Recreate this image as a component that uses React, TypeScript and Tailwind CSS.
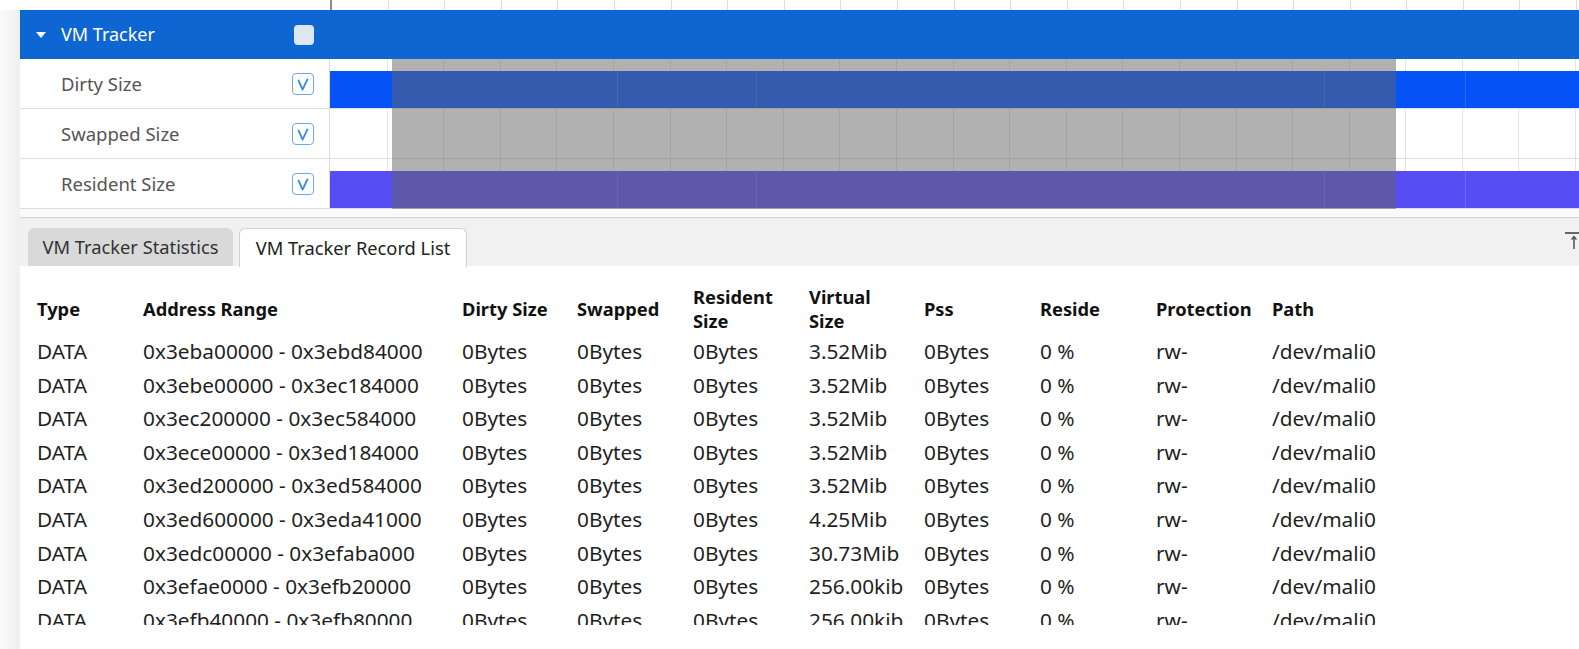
import React from "react";

const ticks = Array.from({ length: 22 }, (_, i) => i);

function GridLines({ color }: { color: string }) {
  return (
    <div className="absolute inset-0 flex pl-[1px]">
      {ticks.map((i) => (
        <div key={i} className={`h-full w-[56.6px] shrink-0 border-r ${color}`} />
      ))}
    </div>
  );
}

function Check() {
  return (
    <div className="flex h-[22px] w-[22px] items-center justify-center rounded-[4px] border-[1.5px] border-[#6ea8ea] bg-white">
      <svg width="22" height="22" viewBox="0 0 22 22" className="-m-[1.5px]">
        <path d="M6.6 7.6 L10.6 16.6 L15.4 6.4" fill="none" stroke="#3b8ce6" strokeWidth="1.9" strokeLinecap="round" strokeLinejoin="round" />
      </svg>
    </div>
  );
}

const segLines = [287, 426, 994, 1135];

function Bar({ color }: { color: string }) {
  return (
    <div className={`absolute left-0 right-0 top-[12px] bottom-0 ${color}`}>
      {segLines.map((x) => (
        <div key={x} className="absolute top-0 bottom-0 w-px bg-white/15" style={{ left: x }} />
      ))}
    </div>
  );
}

const rows = [
  { label: "Dirty Size", bar: "bg-[#0553f6]" },
  { label: "Swapped Size", bar: "" },
  { label: "Resident Size", bar: "bg-[#584cf5]" },
];

const records = [
  ["0x3eba00000 - 0x3ebd84000", "3.52Mib"],
  ["0x3ebe00000 - 0x3ec184000", "3.52Mib"],
  ["0x3ec200000 - 0x3ec584000", "3.52Mib"],
  ["0x3ece00000 - 0x3ed184000", "3.52Mib"],
  ["0x3ed200000 - 0x3ed584000", "3.52Mib"],
  ["0x3ed600000 - 0x3eda41000", "4.25Mib"],
  ["0x3edc00000 - 0x3efaba000", "30.73Mib"],
  ["0x3efae0000 - 0x3efb20000", "256.00kib"],
  ["0x3efb40000 - 0x3efb80000", "256.00kib"],
  ["0x3efc00000 - 0x3efc40000", "256.00kib"],
];

const cols =
  "grid grid-cols-[106px_319px_115px_116px_116px_115px_116px_116px_116px_1fr]";

export default function App() {
  return (
    <div className="flex h-[649px] w-[1579px] flex-col overflow-hidden bg-white font-['Noto_Sans',sans-serif]">
      {/* ruler */}
      <div className="flex h-[10px] shrink-0 bg-white">
        <div className="w-[330px] shrink-0" />
        <div className="w-[2px] shrink-0 bg-[#8c8c8c]" />
        <div className="relative flex-1">
          <div className="absolute inset-0 flex">
            {ticks.map((i) => (
              <div key={i} className="h-full w-[56.6px] shrink-0 border-r border-[#dcdcdc]" />
            ))}
          </div>
        </div>
      </div>

      <div className="flex min-h-0 flex-1">
        {/* gutter */}
        <div className="w-[20px] shrink-0 bg-gradient-to-r from-[#fbfbfb] to-[#efefef]" />

        <div className="flex min-w-0 flex-1 flex-col bg-white">
          {/* group header */}
          <div className="flex h-[49px] shrink-0 bg-[#0e66d2]">
            <div className="flex w-[309px] shrink-0 items-center justify-between pl-[16px] pr-[15px]">
              <div className="flex items-center">
                <svg width="10" height="6" viewBox="0 0 10 6">
                  <path d="M0 0 H10 L5 6 Z" fill="#ffffff" />
                </svg>
                <span className="ml-[15px] text-[18px] text-white">VM Tracker</span>
              </div>
              <div className="h-[20px] w-[20px] rounded-[4px] bg-[#dfe7f5]" />
            </div>
            <div className="flex-1" />
          </div>

          {/* track rows */}
          <div className="relative shrink-0">
            {rows.map((r) => (
              <div key={r.label} className="flex h-[50px] border-b border-[#dedede]">
                <div className="flex w-[310px] shrink-0 items-center justify-between border-r border-[#dcdcdc] pl-[41px] pr-[15px]">
                  <span className="text-[18.5px] text-[#555555]">{r.label}</span>
                  <Check />
                </div>
                <div className="relative flex-1">
                  <GridLines color="border-[#e4e4e4]" />
                  {r.bar && <Bar color={r.bar} />}
                </div>
              </div>
            ))}
            <div className="pointer-events-none absolute left-[372px] top-0 h-[150px] w-[1004px] bg-[rgba(100,100,100,0.5)]" />
          </div>

          {/* separator strip */}
          <div className="h-[9px] shrink-0 border-b border-[#d4d4d4] bg-[#fafafa]" />

          {/* tab bar */}
          <div className="relative flex h-[48px] shrink-0 items-end gap-[6px] bg-[#f1f1f1] pl-[8px]">
            <div className="flex h-[38px] w-[205px] items-center justify-center rounded-t-[6px] bg-[#d9d9d9] text-[18.3px] text-[#333333]">
              VM Tracker Statistics
            </div>
            <div className="-mb-px flex h-[39px] w-[228px] items-center justify-center rounded-t-[6px] border border-b-0 border-[#d0d0d0] bg-white text-[18.3px] text-[#222222]">
              VM Tracker Record List
            </div>
            <svg
              className="absolute right-0 top-[14px]"
              width="14"
              height="20"
              viewBox="0 0 14 20"
            >
              <path d="M0 1 H14" stroke="#444444" strokeWidth="1.6" />
              <path d="M9 5 V17" stroke="#444444" strokeWidth="1.4" />
              <path d="M6.6 7.6 L9 4.6 L11.4 7.6" fill="none" stroke="#444444" strokeWidth="1.3" />
            </svg>
          </div>

          {/* table */}
          <div className="flex-1 bg-white pl-[17px] pt-[17px]">
            <div className="h-[342px] overflow-hidden">
              <div className={`${cols} h-[52px] items-center text-[18.3px] font-bold leading-[24px] text-[#111111]`}>
                <div>Type</div>
                <div>Address Range</div>
                <div>Dirty Size</div>
                <div>Swapped</div>
                <div className="flex flex-col">
                  <span>Resident</span>
                  <span>Size</span>
                </div>
                <div className="flex flex-col">
                  <span>Virtual</span>
                  <span>Size</span>
                </div>
                <div>Pss</div>
                <div>Reside</div>
                <div>Protection</div>
                <div>Path</div>
              </div>
              {records.map(([addr, virt], i) => (
                <div
                  key={i}
                  className={`${cols} h-[33.6px] items-center whitespace-nowrap text-[20.8px] leading-[33.6px] text-[#1f1f1f]`}
                >
                  <div>DATA</div>
                  <div>{addr}</div>
                  <div>0Bytes</div>
                  <div>0Bytes</div>
                  <div>0Bytes</div>
                  <div>{virt}</div>
                  <div>0Bytes</div>
                  <div>0 %</div>
                  <div>rw-</div>
                  <div>/dev/mali0</div>
                </div>
              ))}
            </div>
          </div>
        </div>
      </div>
    </div>
  );
}
